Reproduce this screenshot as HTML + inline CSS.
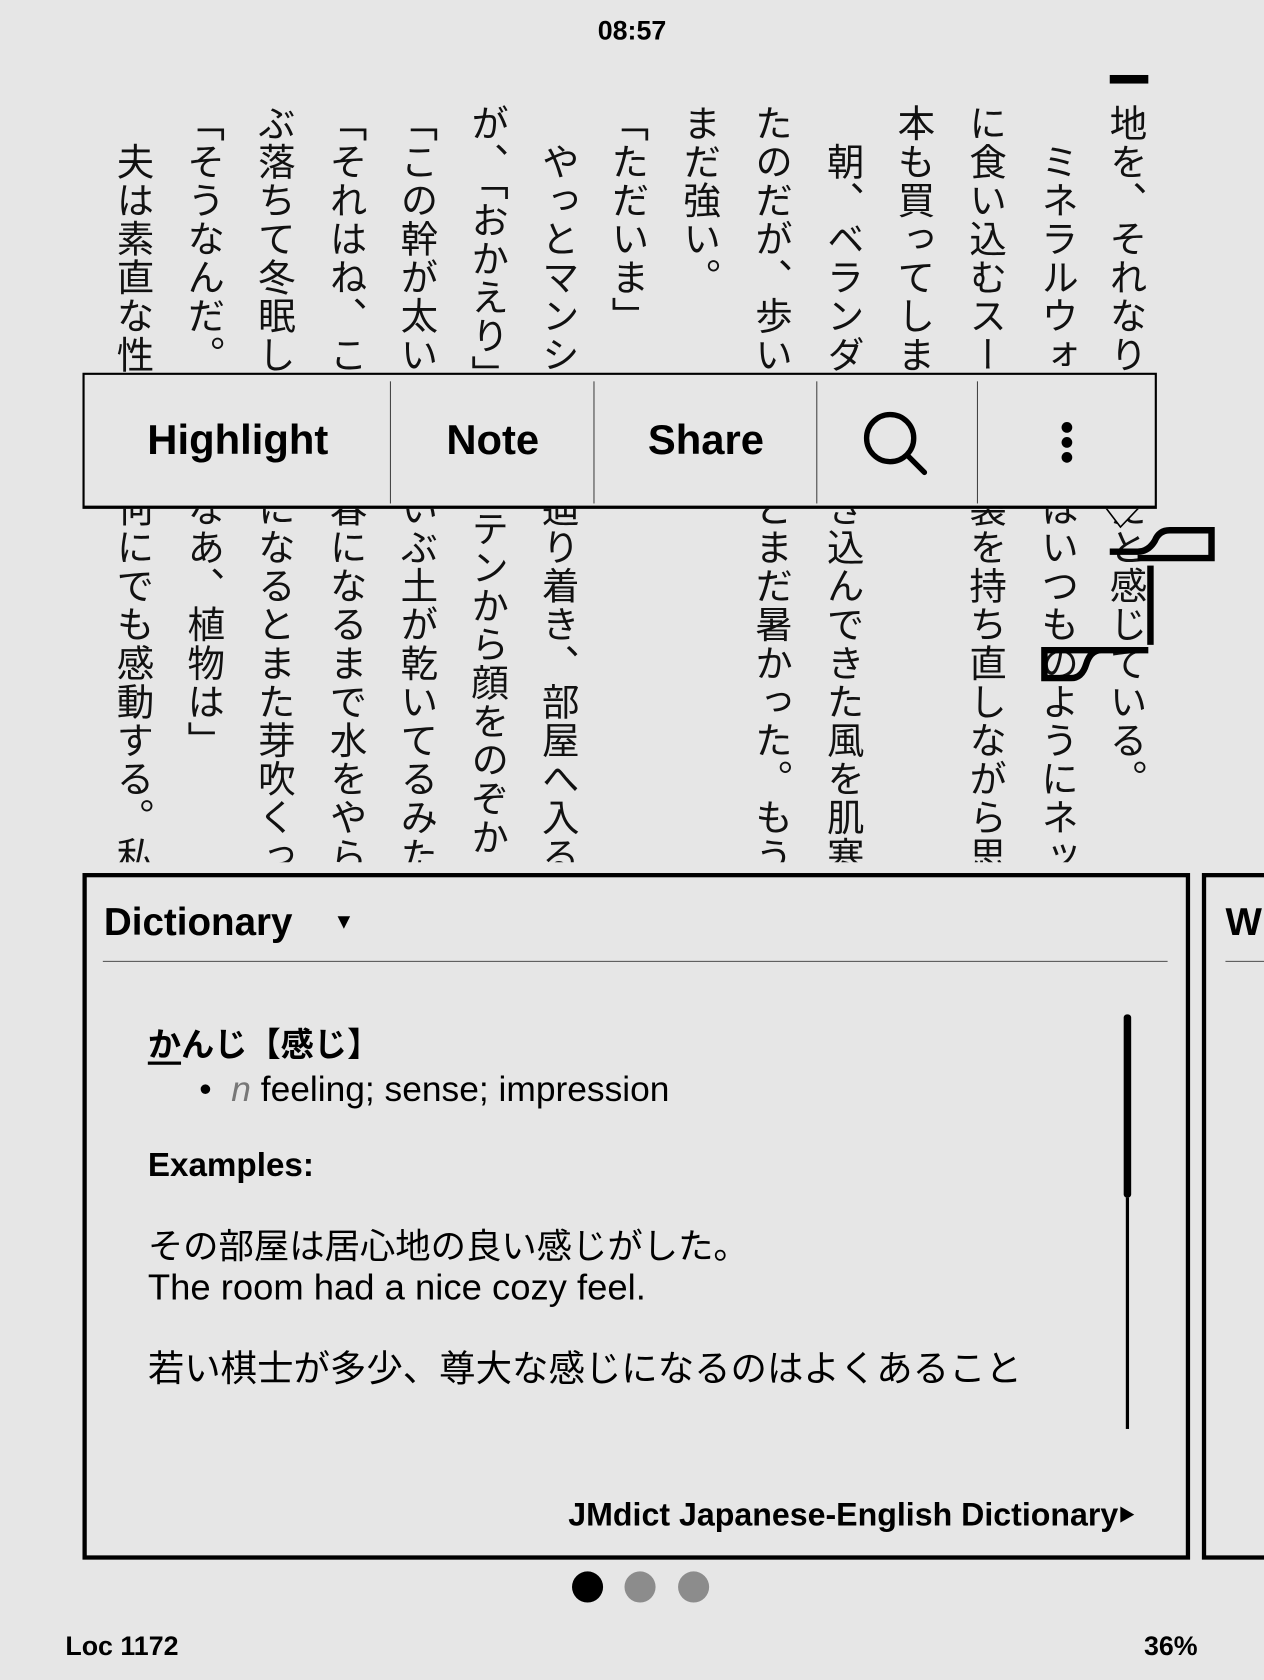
<!DOCTYPE html>
<html><head><meta charset="utf-8"><style>
html,body{margin:0;padding:0;background:#e6e6e6;}
body{width:1264px;height:1680px;overflow:hidden;position:relative;}
#w{position:absolute;left:0;top:0;width:1180px;height:1568px;transform:scale(1.07119);transform-origin:0 0;font-family:"Liberation Sans","Noto Sans CJK JP",sans-serif;color:#000;}
.a{position:absolute;}
#txt{position:absolute;left:0;top:95px;width:1180px;height:710px;overflow:hidden;}
.c{position:absolute;top:2px;writing-mode:vertical-rl;font-family:"Noto Sans CJK JP",sans-serif;font-size:35px;line-height:36px;letter-spacing:1px;white-space:nowrap;color:#111;}
.b{font-weight:bold;}
.m{position:absolute;top:40px;font-size:39px;font-weight:bold;}
.dv{position:absolute;top:6px;width:1px;height:114px;background:#444;}
.jp{font-family:"Liberation Sans","Noto Sans CJK JP",sans-serif;}
</style></head><body><div id="w">
<div class="a b" style="left:0;width:1180px;top:15px;text-align:center;font-size:25px;">08:57</div>
<div class="a" style="left:1036px;top:70px;width:36px;height:8px;background:#000;"></div>
<div id="txt">
<div class="c" style="left:1035px">地を、それなりに上手だと感じている。</div>
<div class="c" style="left:971px">　ミネラルウォーターはいつものようにネット</div>
<div class="c" style="left:904px">に食い込むスーパーの袋を持ち直しながら思</div>
<div class="c" style="left:837px">本も買ってしまった。</div>
<div class="c" style="left:771px">　朝、ベランダを開けき込んできた風を肌寒</div>
<div class="c" style="left:704px">たのだが、歩いてみるとまだ暑かった。もう</div>
<div class="c" style="left:637px">まだ強い。</div>
<div class="c" style="left:570px">「ただいま」</div>
<div class="c" style="left:505px">　やっとマンションま辿り着き、部屋へ入る</div>
<div class="c" style="left:439px">が、「おかえり」とカーテンから顔をのぞか</div>
<div class="c" style="left:373px">「この幹が太いけど、いぶ土が乾いてるみた</div>
<div class="c" style="left:307px">「それはね、こうやっ春になるまで水をやら</div>
<div class="c" style="left:240px">ぶ落ちて冬眠してね、になるとまた芽吹くっ</div>
<div class="c" style="left:174px">「そうなんだ。凄いんなあ、植物は」</div>
<div class="c" style="left:108px">　夫は素直な性格だか何にでも感動する。私</div>
</div>
<svg class="a" style="left:0;top:0" width="1180" height="820">
<path d="M1036 515 H1062 Q1072 515 1078 505 Q1082 495 1092 495 H1131 V521 H1062" fill="none" stroke="#000" stroke-width="6"/>
<rect x="1071" y="528" width="6" height="74" fill="#000"/>
<path d="M1072 607 H1028 Q1018 607 1014 620 Q1010 633 1000 633 H975 V607 H1028" fill="none" stroke="#000" stroke-width="6"/>
<path d="M1030 471 L1046 492 L1066 471" fill="#e6e6e6" stroke="#000" stroke-width="1.5"/>
</svg>
<div class="a" style="left:77px;top:348px;width:999px;height:122px;border:2px solid #000;border-bottom-width:3px;background:#e6e6e6;">
<div class="m" style="left:0;width:286px;text-align:center;">Highlight</div>
<div class="dv" style="left:285px"></div>
<div class="m" style="left:286px;width:190px;text-align:center;">Note</div>
<div class="dv" style="left:475px"></div>
<div class="m" style="left:476px;width:208px;text-align:center;">Share</div>
<div class="dv" style="left:683px"></div>
<div class="dv" style="left:833px"></div>
<svg class="a" style="left:722px;top:30px" width="70" height="70"><circle cx="30" cy="29" r="22" fill="none" stroke="#000" stroke-width="5"/><path d="M46 45 L62 61" stroke="#000" stroke-width="5" stroke-linecap="round"/></svg>
<svg class="a" style="left:905px;top:42px" width="24" height="50"><circle cx="12" cy="7" r="5"/><circle cx="12" cy="21" r="5"/><circle cx="12" cy="35" r="5"/></svg>
</div>
<div class="a" style="left:77px;top:815px;width:1026px;height:633px;border:4px solid #000;"></div>
<div class="a" style="left:1122px;top:815px;width:100px;height:633px;border:4px solid #000;"></div>
<div class="a b" style="left:1144px;top:840px;font-size:36px;">W</div>
<div class="a" style="left:1144px;top:897px;width:40px;height:1px;background:#555;"></div>
<div class="a b" style="left:97px;top:840px;font-size:36px;">Dictionary <span style="font-size:20px;vertical-align:6px;margin-left:28px;">▼</span></div>
<div class="a" style="left:96px;top:897px;width:994px;height:1px;background:#555;"></div>
<div class="a b jp" style="left:138px;top:950px;font-size:31px;"><span style="text-decoration:underline;text-underline-offset:5px;">か</span>んじ【感じ】</div>
<div class="a" style="left:186px;top:998px;font-size:33px;">•&nbsp;&nbsp;<i style="color:#777">n</i> feeling; sense; impression</div>
<div class="a b" style="left:138px;top:1070px;font-size:31px;">Examples:</div>
<div class="a jp" style="left:138px;top:1137px;font-size:33px;">その部屋は居心地の良い感じがした。</div>
<div class="a" style="left:138px;top:1183px;font-size:34px;">The room had a nice cozy feel.</div>
<div class="a jp" style="left:138px;top:1250px;font-size:34px;">若い棋士が多少、尊大な感じになるのはよくあること</div>
<div class="a" style="left:1049px;top:947px;width:7px;height:171px;background:#000;border-radius:3px;"></div>
<div class="a" style="left:1051px;top:1118px;width:3px;height:216px;background:#000;"></div>
<div class="a b" style="right:120px;top:1398px;font-size:30px;">JMdict Japanese-English Dictionary<span style="font-size:16px;vertical-align:4px;">▶</span></div>
<div class="a" style="left:534px;top:1467px;width:29px;height:29px;border-radius:50%;background:#000;"></div>
<div class="a" style="left:583px;top:1467px;width:29px;height:29px;border-radius:50%;background:#8c8c8c;"></div>
<div class="a" style="left:633px;top:1467px;width:29px;height:29px;border-radius:50%;background:#8c8c8c;"></div>
<div class="a b" style="left:61px;top:1523px;font-size:25px;">Loc 1172</div>
<div class="a b" style="right:62px;top:1523px;font-size:25px;">36%</div>
</div></body></html>
